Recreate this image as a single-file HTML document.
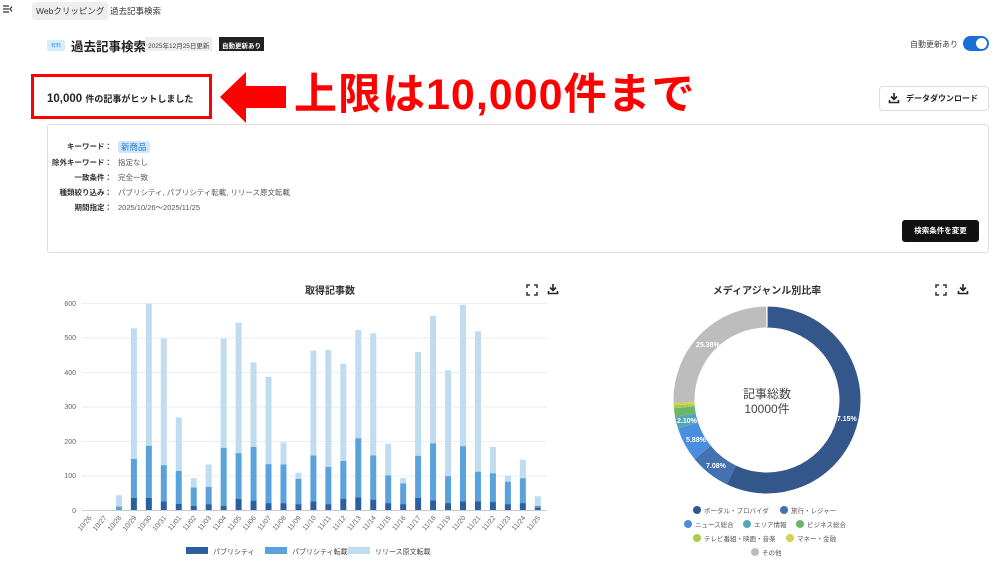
<!DOCTYPE html>
<html><head><meta charset="utf-8"><style>
*{margin:0;padding:0;box-sizing:border-box}
body{width:1000px;height:570px;background:#fff;font-family:"Liberation Sans","Noto Sans CJK JP",sans-serif;color:#222;position:relative;overflow:hidden}
.a{position:absolute;white-space:nowrap}
</style></head><body>
<svg class="a" style="left:3px;top:5px" width="10" height="8"><path d="M0 1h6M0 4h6M0 7h6M9 1.5l-2 2.5 2 2.5" stroke="#333" stroke-width="1.2" fill="none"/></svg>
<div class="a" style="left:32px;top:2px;background:#eee;border-radius:3px;padding:3px 4px;font-size:8.5px;color:#333">Webクリッピング</div>
<div class="a" style="left:110px;top:5px;font-size:8.5px;color:#333">過去記事検索</div>

<div class="a" style="left:47px;top:40px;background:#d6ecff;color:#3a8ee6;font-size:5px;padding:2px 4px;border-radius:2px">有料</div>
<div class="a" style="left:71px;top:36px;font-size:12.5px;font-weight:bold;color:#222">過去記事検索</div>
<div class="a" style="left:145px;top:37px;background:#eee;font-size:6.5px;padding:3px 3px;color:#444;height:14px">2025年12月25日更新</div>
<div class="a" style="left:219px;top:37px;background:#222;color:#fff;font-size:6.5px;font-weight:bold;padding:3px 3px;height:14px">自動更新あり</div>

<div class="a" style="left:910px;top:39px;font-size:8px;color:#444">自動更新あり</div>
<div class="a" style="left:963px;top:36px;width:26px;height:15px;border-radius:8px;background:#1a6ed8"><div class="a" style="right:2px;top:2px;width:11px;height:11px;border-radius:50%;background:#fff"></div></div>

<div class="a" style="left:31px;top:74px;width:181px;height:45px;border:3px solid #f00"></div>
<div class="a" style="left:47px;top:92px;font-size:11.5px;font-weight:bold;color:#222">10,000 <span style="font-size:9px">件の記事がヒットしました</span></div>
<svg class="a" style="left:218px;top:70px" width="70" height="55"><polygon points="2,27 28,2 28,16 68,16 68,38 28,38 28,53" fill="#f00"/></svg>
<div class="a" style="left:294px;top:72px;font-size:43px;font-weight:bold;color:#f00;line-height:46px;letter-spacing:1px">上限は10,000件まで</div>

<div class="a" style="left:879px;top:86px;width:110px;height:25px;border:1px solid #ddd;border-radius:4px;font-size:8px;font-weight:bold;line-height:23px;padding-left:26px;color:#222">データダウンロード</div>
<svg class="a" style="left:888px;top:92px" width="12" height="12"><path d="M6 1v6M3 4.5l3 3 3-3M1.5 8v2.5h9V8" stroke="#222" stroke-width="1.6" fill="none"/></svg>

<div class="a" style="left:47px;top:124px;width:942px;height:129px;border:1px solid #ddd;border-radius:3px"></div>
<div class="a" style="left:40px;top:140px;width:72px;text-align:right;font-size:7.5px;font-weight:bold;color:#333;line-height:15px">
<div style="height:15px;line-height:13px">キーワード：</div><div>除外キーワード：</div><div>一致条件：</div><div>種類絞り込み：</div><div>期間指定：</div></div>
<div class="a" style="left:118px;top:140px;font-size:7.5px;color:#555;line-height:15px">
<div style="height:15px"><span style="background:#cfe6fb;color:#2a7bd0;padding:1px 3px;border-radius:2px;font-size:8.5px">新商品</span></div><div>指定なし</div><div>完全一致</div><div>パブリシティ, パブリシティ転載, リリース原文転載</div><div>2025/10/26〜2025/11/25</div></div>
<div class="a" style="left:902px;top:220px;width:77px;height:22px;background:#111;color:#fff;border-radius:3px;font-size:7.5px;font-weight:bold;text-align:center;line-height:22px">検索条件を変更</div>

<div class="a" style="left:0;top:282px;width:660px;text-align:center;font-size:10px;font-weight:bold;color:#333">取得記事数</div>
<div class="a" style="left:667px;top:282px;width:200px;text-align:center;font-size:10px;font-weight:bold;color:#333">メディアジャンル別比率</div>
<svg class="a" style="left:526px;top:284px" width="12" height="12"><path d="M1 4V1h3M8 1h3v3M11 8v3H8M4 11H1V8" stroke="#333" stroke-width="1.5" fill="none"/></svg>
<svg class="a" style="left:547px;top:283px" width="12" height="12"><path d="M6 1v6M3 4.5l3 3 3-3M1.5 8v2.5h9V8" stroke="#222" stroke-width="1.6" fill="none"/></svg>
<svg class="a" style="left:935px;top:284px" width="12" height="12"><path d="M1 4V1h3M8 1h3v3M11 8v3H8M4 11H1V8" stroke="#333" stroke-width="1.5" fill="none"/></svg>
<svg class="a" style="left:957px;top:283px" width="12" height="12"><path d="M6 1v6M3 4.5l3 3 3-3M1.5 8v2.5h9V8" stroke="#222" stroke-width="1.6" fill="none"/></svg>

<svg class="a" style="left:0;top:0" width="1000" height="570">
<g font-size="7" fill="#666" text-anchor="end" font-family="Liberation Sans,sans-serif">
<text x="76" y="306">600</text><text x="76" y="340">500</text><text x="76" y="375">400</text><text x="76" y="409">300</text><text x="76" y="444">200</text><text x="76" y="478">100</text><text x="76" y="513">0</text>
</g>
<g stroke="#eee" stroke-width="1">
<line x1="82" y1="303.5" x2="547" y2="303.5"/><line x1="82" y1="338" x2="547" y2="338"/><line x1="82" y1="372.5" x2="547" y2="372.5"/><line x1="82" y1="407" x2="547" y2="407"/><line x1="82" y1="441.5" x2="547" y2="441.5"/><line x1="82" y1="476" x2="547" y2="476"/>
</g>
<line x1="82" y1="510.5" x2="547" y2="510.5" stroke="#ccc"/>
<g id="bars"></g>
<g id="lbl" font-size="7" fill="#666" font-family="Liberation Sans,sans-serif"></g>
<g font-size="7" fill="#444">
<rect x="186" y="547" width="22" height="7" fill="#2a5fa0"/><text x="213" y="554">パブリシティ</text>
<rect x="265" y="547" width="22" height="7" fill="#5aa2dc"/><text x="292" y="554">パブリシティ転載</text>
<rect x="348" y="547" width="22" height="7" fill="#bfdcf0"/><text x="375" y="554">リリース原文転載</text>
</g>
<g transform="rotate(-90 767 400)" fill="none" stroke-width="21">
<circle cx="767" cy="400" r="83" pathLength="100" stroke="#34578b" stroke-dasharray="57.15 100" stroke-dashoffset="0"/>
<circle cx="767" cy="400" r="83" pathLength="100" stroke="#4472b0" stroke-dasharray="7.05 100" stroke-dashoffset="-57.15"/>
<circle cx="767" cy="400" r="83" pathLength="100" stroke="#4a8fdf" stroke-dasharray="5.88 100" stroke-dashoffset="-64.2"/>
<circle cx="767" cy="400" r="83" pathLength="100" stroke="#55a4b8" stroke-dasharray="2.1 100" stroke-dashoffset="-70.08"/>
<circle cx="767" cy="400" r="83" pathLength="100" stroke="#6ab66a" stroke-dasharray="1.5 100" stroke-dashoffset="-72.18"/>
<circle cx="767" cy="400" r="83" pathLength="100" stroke="#a8cc48" stroke-dasharray="0.5 100" stroke-dashoffset="-73.68"/>
<circle cx="767" cy="400" r="83" pathLength="100" stroke="#d4d050" stroke-dasharray="0.44 100" stroke-dashoffset="-74.18"/>
<circle cx="767" cy="400" r="83" pathLength="100" stroke="#bdbdbd" stroke-dasharray="25.38 100" stroke-dashoffset="-74.62"/>
</g>
<g stroke="#fff" stroke-width="1.2"><line x1="767" y1="305" x2="767" y2="327"/></g>
<g font-size="7" fill="#fff" font-weight="bold" font-family="Liberation Sans,sans-serif">
<text x="833" y="421">57.15%</text><text x="706" y="468">7.08%</text><text x="686" y="442">5.88%</text><text x="677" y="423">2.10%</text><text x="696" y="347">25.38%</text>
</g>
<text x="767" y="398" text-anchor="middle" font-size="12" fill="#444">記事総数</text>
<text x="767" y="413" text-anchor="middle" font-size="12" fill="#444">10000件</text>
<g font-size="6.5" fill="#555">
<circle cx="697" cy="510" r="4" fill="#34578b"/><text x="704" y="513">ポータル・プロバイダ</text>
<circle cx="784" cy="510" r="4" fill="#4472b0"/><text x="791" y="513">旅行・レジャー</text>
<circle cx="688" cy="524" r="4" fill="#4a8fdf"/><text x="695" y="527">ニュース総合</text>
<circle cx="747" cy="524" r="4" fill="#55a4b8"/><text x="754" y="527">エリア情報</text>
<circle cx="800" cy="524" r="4" fill="#6ab66a"/><text x="807" y="527">ビジネス総合</text>
<circle cx="697" cy="538" r="4" fill="#a8cc48"/><text x="704" y="541">テレビ番組・映画・音楽</text>
<circle cx="790" cy="538" r="4" fill="#d4d050"/><text x="797" y="541">マネー・金融</text>
<circle cx="755" cy="552" r="4" fill="#bdbdbd"/><text x="762" y="555">その他</text>
</g>
</svg>
<script>
var d=[[0,0,0],[0,0,0],[43,10,0],[527,148,35],[598,186,35],[497,130,25],[268,113,18],[92,65,12],[132,67,17],[497,180,12],[543,165,32],[428,183,27],[386,133,20],[196,132,20],[108,90,17],[462,158,25],[464,125,17],[424,142,32],[522,208,37],[512,158,30],[192,100,20],[93,77,17],[458,157,35],[563,193,28],[405,98,20],[595,185,25],[518,111,25],[183,106,23],[100,82,17],[146,92,20],[40,12,7]];
var L=["10/26","10/27","10/28","10/29","10/30","10/31","11/01","11/02","11/03","11/04","11/05","11/06","11/07","11/08","11/09","11/10","11/11","11/12","11/13","11/14","11/15","11/16","11/17","11/18","11/19","11/20","11/21","11/22","11/23","11/24","11/25"];
var s="",t="",k=0.345,b=510;
for(var i=0;i<31;i++){var cx=89+i*14.96,x=cx-3;var v=d[i];
if(v[0]){s+='<rect x="'+x+'" y="'+(b-v[0]*k)+'" width="6" height="'+((v[0]-v[1])*k)+'" fill="#bfdcf0"/>';}
if(v[1]){s+='<rect x="'+x+'" y="'+(b-v[1]*k)+'" width="6" height="'+((v[1]-v[2])*k)+'" fill="#5aa2dc"/>';}
if(v[2]){s+='<rect x="'+x+'" y="'+(b-v[2]*k)+'" width="6" height="'+(v[2]*k)+'" fill="#2a5fa0"/>';}
t+='<text transform="translate('+(cx+3)+',518) rotate(-50)" text-anchor="end">'+L[i]+'</text>';}
document.getElementById("bars").innerHTML=s;document.getElementById("lbl").innerHTML=t;
</script>
</body></html>
